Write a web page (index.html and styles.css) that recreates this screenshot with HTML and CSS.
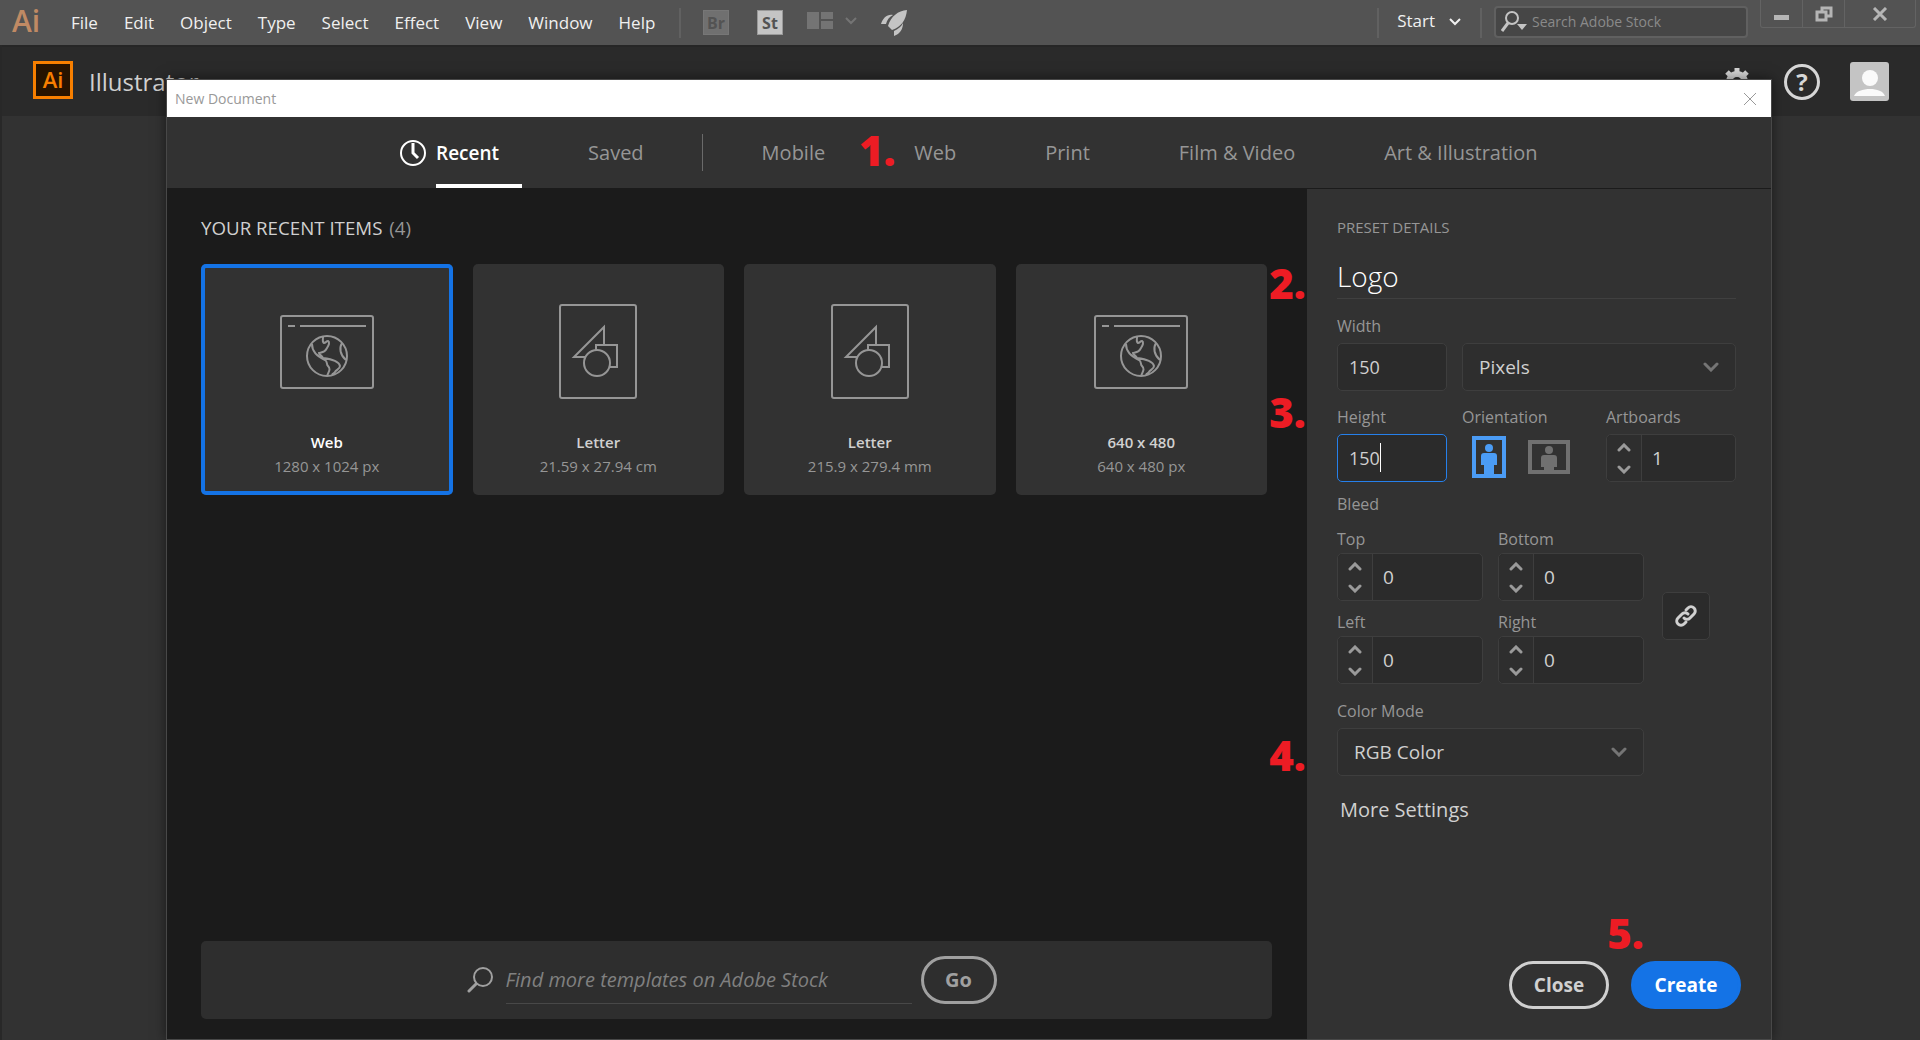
FILE: index.html
```html
<!DOCTYPE html>
<html lang="en">
<head>
<meta charset="utf-8">
<title>New Document - Illustrator</title>
<link rel="stylesheet" href="styles.css">
</head>
<body>
<svg class="defs" aria-hidden="true">
  <defs>
    <symbol id="chevron-down" viewBox="0 0 16 10"><path d="M2 2l6 6 6-6" fill="none" stroke="currentColor" stroke-width="3" stroke-linecap="round" stroke-linejoin="miter"/></symbol>
    <symbol id="step-up" viewBox="0 0 14 9"><path d="M2 7l5-5 5 5" fill="none" stroke="currentColor" stroke-width="3" stroke-linecap="round"/></symbol>
    <symbol id="step-down" viewBox="0 0 14 9"><path d="M2 2l5 5 5-5" fill="none" stroke="currentColor" stroke-width="3" stroke-linecap="round"/></symbol>
    <symbol id="web-preset" viewBox="0 0 94 74">
      <g fill="none" stroke="currentColor" stroke-width="2">
        <rect x="1" y="1" width="92" height="72" rx="2"/>
        <path d="M8 11h7M20 11h66"/>
        <circle cx="47" cy="41" r="20"/>
        <path d="M32 29c0 7 4 12 13 16 3 2 1 4 3 6 3 3 1 5-1 10M43 22c0 3-1 5 1 6 2 0 2-2 4-2 2 1 1 4-1 7-2 4-4 4-8 5 0 2 3 2 4 5 8 1 16 3 17 8 0 3-4 4-5 6-1 2-2 1-3 3M62 28c-3 5-2 12 4 17"/>
      </g>
    </symbol>
    <symbol id="art-preset" viewBox="0 0 78 95">
      <g fill="none" stroke="currentColor" stroke-width="2">
        <rect x="1" y="1" width="76" height="93" rx="2"/>
        <path d="M27 53H15l30-30v18M37 46v-5h21v22h-8"/>
        <circle cx="38" cy="59" r="13"/>
      </g>
    </symbol>
  </defs>
</svg>

<header class="menubar">
  <span class="brand">Ai</span>
  <nav class="menus">
    <button>File</button><button>Edit</button><button>Object</button><button>Type</button><button>Select</button><button>Effect</button><button>View</button><button>Window</button><button>Help</button>
  </nav>
  <span class="rule"></span>
  <div class="tools">
    <button class="chip chip-off">Br</button>
    <button class="chip">St</button>
    <button class="layout" aria-label="Arrange documents">
      <svg width="26" height="17" viewBox="0 0 26 17" fill="currentColor"><path d="M0 0h12v17H0zM14 0h12v7H14zM14 9h12v8H14z"/></svg>
      <svg width="12" height="8" viewBox="0 0 12 8" fill="none" stroke="currentColor" stroke-width="2"><path d="M1 1l5 5 5-5"/></svg>
    </button>
    <button class="rocket" aria-label="GPU performance">
      <svg width="26" height="26" viewBox="0 0 26 26" fill="currentColor"><path d="M26 0c-9 1-16 6-19 16l4 4C20 17 25 10 26 0zM12 5C6 4 2 8 0 14h5c1-4 3-7 7-9zM13 21c4-2 7-4 9-8 0 6-3 11-9 13z"/></svg>
    </button>
  </div>
  <div class="right-tools">
    <span class="rule"></span>
    <button class="workspace">Start <svg width="12" height="9" viewBox="0 0 12 9" fill="none" stroke="currentColor" stroke-width="2"><path d="M1 1l5 5 5-5"/></svg></button>
    <span class="rule"></span>
    <label class="stock-search">
      <svg width="26" height="21" viewBox="0 0 26 21"><circle cx="11" cy="7" r="6" fill="none" stroke="currentColor" stroke-width="2"/><path d="M7 12l-6 8" stroke="currentColor" stroke-width="3"/><path d="M16 13h10l-5 6z" fill="currentColor"/></svg>
      <input type="text" placeholder="Search Adobe Stock" aria-label="Search Adobe Stock">
    </label>
    <div class="window-buttons">
      <button aria-label="Minimize"><svg width="16" height="16" viewBox="0 0 16 16"><path d="M0 9h15v5H0z" fill="currentColor"/></svg></button>
      <button aria-label="Restore"><svg width="18" height="16" viewBox="0 0 18 16" fill="none" stroke="currentColor" stroke-width="3"><path d="M7 5V2h9v8h-4"/><path d="M2 6h9v8H2z"/></svg></button>
      <button class="quit" aria-label="Close window"><svg width="16" height="14" viewBox="0 0 16 14" stroke="currentColor" stroke-width="3"><path d="M2 1l12 12M14 1L2 13"/></svg></button>
    </div>
  </div>
</header>

<main class="app">
  <div class="app-header">
    <span class="app-logo">Ai</span>
    <h1>Illustrator</h1>
    <div class="app-actions">
      <button aria-label="Settings"><svg width="30" height="30" viewBox="0 0 30 30"><circle cx="15" cy="15" r="8" fill="none" stroke="currentColor" stroke-width="6"/><path d="M15 1v6M15 23v6M1 15h6M23 15h6M5 5l4 4M21 21l4 4M25 5l-4 4M9 21l-4 4" stroke="currentColor" stroke-width="5"/></svg></button>
      <button class="help" aria-label="Help">?</button>
      <button aria-label="Account"><svg width="39" height="39" viewBox="0 0 39 39"><rect width="39" height="39" rx="3" fill="#c4c4c4"/><ellipse cx="20" cy="16" rx="8" ry="8" fill="#fafafa"/><path d="M4 34c2-5 9-7 16-7s13 2 15 7z" fill="#fafafa"/></svg></button>
    </div>
  </div>

  <section class="dialog" role="dialog" aria-labelledby="dialog-title">
    <div class="titlebar">
      <h2 id="dialog-title">New Document</h2>
      <button aria-label="Close dialog"><svg width="14" height="14" viewBox="0 0 14 14" stroke="currentColor"><path d="M1 1l12 12M13 1L1 13"/></svg></button>
    </div>

    <nav class="tabs">
      <a class="active" href="#recent">
        <svg width="26" height="26" viewBox="0 0 26 26" fill="none" stroke="currentColor"><circle cx="13" cy="13" r="12" stroke-width="2"/><path d="M13 3v10l5 5" stroke-width="3"/></svg>
        <span>Recent</span>
      </a>
      <a href="#saved">Saved</a>
      <span class="tab-rule"></span>
      <a href="#mobile">Mobile</a>
      <a href="#web">Web</a>
      <a href="#print">Print</a>
      <a href="#film">Film &amp; Video</a>
      <a href="#art">Art &amp; Illustration</a>
      <span class="marker marker-1">1.</span>
    </nav>

    <div class="panes">
      <div class="recent" id="recent">
        <h3>YOUR RECENT ITEMS <span>(4)</span></h3>
        <div class="cards">
          <button class="card selected"><svg width="94" height="74"><use href="#web-preset"/></svg><strong>Web</strong><span>1280 x 1024 px</span></button>
          <button class="card"><svg width="78" height="95"><use href="#art-preset"/></svg><strong>Letter</strong><span>21.59 x 27.94 cm</span></button>
          <button class="card"><svg width="78" height="95"><use href="#art-preset"/></svg><strong>Letter</strong><span>215.9 x 279.4 mm</span></button>
          <button class="card"><svg width="94" height="74"><use href="#web-preset"/></svg><strong>640 x 480</strong><span>640 x 480 px</span></button>
        </div>
        <form class="templates">
          <svg width="26" height="26" viewBox="0 0 26 26" fill="none" stroke="currentColor"><circle cx="16" cy="10" r="9" stroke-width="2"/><path d="M9 17l-7 7" stroke-width="3" stroke-linecap="round"/></svg>
          <input type="text" placeholder="Find more templates on Adobe Stock" aria-label="Find more templates on Adobe Stock">
          <button type="button">Go</button>
        </form>
        <span class="marker marker-2">2.</span>
        <span class="marker marker-3">3.</span>
        <span class="marker marker-4">4.</span>
      </div>

      <form class="details">
        <h3>PRESET DETAILS</h3>
        <input class="doc-name" type="text" value="Logo" aria-label="Document name">

        <div class="size-grid">
          <div class="field">
            <label for="width">Width</label>
            <input class="box" id="width" type="text" value="150">
          </div>
          <div class="field units">
            <div class="select"><select id="units" aria-label="Units"><option>Pixels</option></select><svg width="16" height="10"><use href="#chevron-down"/></svg></div>
          </div>
          <div class="field">
            <label for="height">Height</label>
            <div class="editing"><input class="box" id="height" type="text" value="150"><i class="caret"></i></div>
          </div>
          <div class="field">
            <span class="label">Orientation</span>
            <div class="orientation">
              <button type="button" class="on" aria-label="Portrait"><svg width="34" height="42" viewBox="0 0 34 42"><path d="M2 2h30v38H2z" fill="none" stroke="currentColor" stroke-width="4"/><circle cx="17" cy="12" r="4" fill="currentColor"/><path d="M9 20q0-3 3-3h10q3 0 3 3v9h-3v10H12V29H9z" fill="currentColor"/></svg></button>
              <button type="button" aria-label="Landscape"><svg width="42" height="34" viewBox="0 0 42 34"><path d="M2 2h38v30H2z" fill="none" stroke="currentColor" stroke-width="4"/><circle cx="21" cy="10" r="4" fill="currentColor"/><path d="M13 18q0-3 3-3h10q3 0 3 3v9h-3v5H16v-5h-3z" fill="currentColor"/></svg></button>
            </div>
          </div>
          <div class="field">
            <label for="artboards">Artboards</label>
            <div class="stepper"><div class="steps"><button type="button" aria-label="More artboards"><svg width="14" height="9"><use href="#step-up"/></svg></button><button type="button" aria-label="Fewer artboards"><svg width="14" height="9"><use href="#step-down"/></svg></button></div><input id="artboards" type="text" value="1"></div>
          </div>
        </div>

        <span class="label bleed-title">Bleed</span>
        <div class="bleed">
          <div class="bleed-grid">
            <div class="field"><label for="top">Top</label>
              <div class="stepper"><div class="steps"><button type="button" aria-label="Increase top"><svg width="14" height="9"><use href="#step-up"/></svg></button><button type="button" aria-label="Decrease top"><svg width="14" height="9"><use href="#step-down"/></svg></button></div><input id="top" type="text" value="0"></div></div>
            <div class="field"><label for="bottom">Bottom</label>
              <div class="stepper"><div class="steps"><button type="button" aria-label="Increase bottom"><svg width="14" height="9"><use href="#step-up"/></svg></button><button type="button" aria-label="Decrease bottom"><svg width="14" height="9"><use href="#step-down"/></svg></button></div><input id="bottom" type="text" value="0"></div></div>
            <div class="field"><label for="left">Left</label>
              <div class="stepper"><div class="steps"><button type="button" aria-label="Increase left"><svg width="14" height="9"><use href="#step-up"/></svg></button><button type="button" aria-label="Decrease left"><svg width="14" height="9"><use href="#step-down"/></svg></button></div><input id="left" type="text" value="0"></div></div>
            <div class="field"><label for="right">Right</label>
              <div class="stepper"><div class="steps"><button type="button" aria-label="Increase right"><svg width="14" height="9"><use href="#step-up"/></svg></button><button type="button" aria-label="Decrease right"><svg width="14" height="9"><use href="#step-down"/></svg></button></div><input id="right" type="text" value="0"></div></div>
          </div>
          <button type="button" class="link" aria-label="Link bleed values"><svg width="24" height="24" viewBox="0 0 24 24" fill="none" stroke="currentColor" stroke-width="3" stroke-linecap="round"><path d="M10 14a4 4 0 0 0 6 0l4-4a4 4 0 0 0-6-6l-2 2"/><path d="M14 10a4 4 0 0 0-6 0l-4 4a4 4 0 0 0 6 6l2-2"/></svg></button>
        </div>

        <div class="field color-mode">
          <label for="mode">Color Mode</label>
          <div class="select"><select id="mode"><option>RGB Color</option></select><svg width="16" height="10"><use href="#chevron-down"/></svg></div>
        </div>
        <button type="button" class="more">More Settings</button>

        <div class="actions">
          <button type="button" class="pill">Close</button>
          <button type="button" class="pill primary">Create</button>
          <span class="marker marker-5">5.</span>
        </div>
      </form>
    </div>
  </section>
</main>
</body>
</html>
```
FILE: styles.css
```css
* { box-sizing: border-box; }
html, body { height: 100%; }
body {
  margin: 0;
  display: flex;
  flex-direction: column;
  overflow: hidden;
  background: #323232;
  color: #d0d0d0;
  font: 16px/24px "Open Sans", "Noto Sans", sans-serif;
}
button, input, select { font: inherit; color: inherit; }
button { border: 0; padding: 0; background: none; }
input, select { min-width: 0; border: 0; padding: 0; background: none; outline: none; }
select { appearance: none; }
svg { display: block; flex: none; }
h1, h2, h3 { margin: 0; font-weight: 400; }
.defs { position: absolute; width: 0; height: 0; }

/* Application menu bar */
.menubar {
  flex: none;
  display: flex;
  align-items: center;
  height: 45px;
  background: #535353;
  color: #f0f0f0;
}
.brand { width: 71px; padding: 0 0 4px 12px; color: #c08a64; font-size: 30px; font-weight: 600; line-height: 40px; }
.menus { display: flex; gap: 26px; width: 608px; font-size: 17px; }
.rule { width: 2px; height: 30px; background: #616161; }
.tools { display: flex; align-items: center; margin-left: 22px; }
.chip {
  width: 26px;
  height: 25px;
  margin-right: 28px;
  border: 1px solid #999;
  background: #c4c4c4;
  color: #535353;
  font-size: 16px;
  font-weight: 700;
  line-height: 22px;
}
.chip-off { border-color: #777; background: #707070; }
.layout { display: flex; align-items: center; gap: 12px; margin: 0 24px 4px -4px; color: #747474; }
.rocket { color: #c4c4c4; }
.right-tools { display: flex; align-items: center; align-self: stretch; margin-left: auto; padding-right: 4px; }
.workspace { display: flex; align-items: center; gap: 14px; margin: 0 19px 4px 18px; font-size: 17px; }
.workspace svg { margin-top: 4px; }
.stock-search {
  display: flex;
  align-items: center;
  gap: 5px;
  width: 254px;
  height: 32px;
  margin: 0 12px 2px;
  padding-left: 5px;
  border: 2px solid #606060;
  border-radius: 4px;
  background: #464646;
  color: #c4c4c4;
  font-size: 14px;
}
.stock-search input::placeholder { color: #8a8a8a; }
.stock-search input { flex: 1; }
.window-buttons { display: flex; align-self: flex-start; height: 28px; border: solid #636363; border-width: 0 1px 1px; border-radius: 0 0 3px 3px; color: #b5b5b5; }
.window-buttons button { display: grid; place-items: center; width: 42px; border-right: 1px solid #636363; }
.window-buttons .quit { width: 70px; border: 0; }

/* Start screen behind the dialog */
.app { position: relative; flex: 1; min-height: 0; border-left: 2px solid #282828; }
.app-header { display: flex; align-items: center; height: 71px; padding: 0 31px; border-top: 2px solid #262626; background: #2a2a2a; }
.app-logo {
  width: 40px;
  height: 38px;
  margin-bottom: 4px;
  border: 3px solid #f77f00;
  background: #261300;
  color: #f77f00;
  font-size: 22px;
  font-weight: 600;
  line-height: 30px;
  text-align: center;
}
h1 { margin-left: 16px; font-size: 24px; }
.app-actions { display: flex; align-items: center; margin-left: auto; color: #d6d6d6; }
.help { width: 36px; height: 36px; margin: 0 30px 0 32px; border: 3px solid; border-radius: 50%; font-size: 24px; font-weight: 700; line-height: 28px; }

/* New Document window */
.dialog {
  position: absolute;
  inset: 34px 148px 0 164px;
  display: flex;
  flex-direction: column;
  border: 1px solid #484848;
  background: #323232;
  box-shadow: 0 0 12px rgba(0, 0, 0, .5);
}
.titlebar { display: flex; align-items: center; justify-content: space-between; height: 37px; padding: 0 14px 0 8px; background: #fff; color: #999; }
.titlebar h2 { font-size: 14px; }

.tabs { position: relative; display: flex; align-items: center; height: 71px; padding-left: 233px; font-size: 20px; white-space: nowrap; }
.tabs a { margin-right: 89px; color: #969696; text-decoration: none; }
.tabs .active { display: flex; align-items: center; align-self: stretch; gap: 10px; margin-right: 66px; color: #fff; font-size: 19px; font-weight: 600; }
.tabs .active span { align-self: stretch; padding: 24px 23px 0 0; border-bottom: 4px solid #fff; }
.tabs .tab-rule { width: 1px; height: 37px; margin: 0 59px 0 -31px; background: #6a6a6a; }

.panes { flex: 1; display: flex; min-height: 0; }
.recent { position: relative; flex: 1; display: flex; flex-direction: column; padding: 28px 35px 20px 34px; background: #1b1b1b; }
.recent h3 span { margin-left: 2px; color: #969696; }
.cards { display: grid; grid-template-columns: repeat(4, 1fr); gap: 20px; margin: 24px 5px 0 0; }
.card { display: flex; flex-direction: column; align-items: center; height: 231px; padding: 9px 0 17px; border-radius: 5px; background: #323232; color: #969696; font-size: 15px; }
.card.selected { box-shadow: inset 0 0 0 4px #1473e6; }
.card svg { margin: auto; }
.card strong { color: #d0d0d0; font-weight: 600; }
.card.selected strong { color: #fff; }
.templates { display: flex; align-items: center; justify-content: center; height: 78px; margin-top: auto; padding-right: 10px; border-radius: 5px; background: #2e2e2e; color: #a0a0a0; font-size: 20px; }
.templates input { width: 406px; height: 40px; margin: 8px 9px 0 13px; padding-bottom: 8px; border-bottom: 1px solid #484848; font-style: italic; }
.templates input::placeholder { color: #808080; }
.templates button { width: 76px; height: 48px; border: 3px solid #a0a0a0; border-radius: 24px; font-weight: 700; }

/* Preset details */
.details { width: 464px; display: flex; flex-direction: column; padding: 26px 35px 30px 30px; border-top: 1px solid #1b1b1b; }
.details h3, .details label, .label { color: #969696; }
.details h3 { font-size: 15px; }
.doc-name { height: 42px; margin-top: 18px; padding-bottom: 4px; border-bottom: 1px solid #404040; color: #fff; font-size: 28px; font-weight: 300; }
.field { display: flex; flex-direction: column; justify-content: flex-end; gap: 5px; }
.size-grid { display: grid; grid-template-columns: 110px 1fr 130px; gap: 14px 15px; margin-top: 15px; }
.units { grid-column: span 2; }
.box, .select, .stepper, .link { height: 48px; border: 1px solid #3e3e3e; border-radius: 5px; background: #2b2b2b; font-size: 18px; }
.box { width: 100%; padding-left: 11px; }
.editing { position: relative; }
.editing .box { border-color: #2680eb; }
.caret { position: absolute; left: 43px; top: 9px; width: 1px; height: 29px; background: #fff; }
.select { display: grid; align-items: center; background: #2e2e2e; font-size: 19px; }
.select select, .select svg { grid-area: 1 / 1; }
.select select { width: 100%; height: 100%; padding-left: 16px; }
.select svg { justify-self: end; margin-right: 16px; color: #757575; pointer-events: none; }
.orientation { display: flex; align-items: center; gap: 22px; height: 48px; padding: 0 0 2px 10px; color: #707070; }
.orientation .on { color: #4b9cf5; }
.stepper { display: flex; font-size: 19px; }
.steps { flex: none; display: flex; flex-direction: column; justify-content: space-between; align-items: center; width: 35px; padding: 8px 0 7px; border-right: 1px solid #3e3e3e; background: #2e2e2e; border-radius: 5px 0 0 5px; color: #9a9a9a; }
.stepper input { flex: 1; padding-left: 10px; }
.bleed-title { margin-top: 10px; }
.bleed { display: flex; align-items: center; gap: 18px; margin-top: 11px; }
.bleed-grid { display: grid; grid-template-columns: 146px 146px; gap: 9px 15px; }
.bleed .field { gap: 2px; }
.link { display: grid; place-items: center; width: 48px; margin-top: 20px; }
.color-mode { width: 307px; margin-top: 15px; }
.more { align-self: flex-start; margin: 22px 0 0 3px; font-size: 20px; }
.actions { position: relative; display: flex; justify-content: flex-end; gap: 22px; margin: auto -5px 0 0; }
.pill { width: 100px; height: 48px; border: 3px solid #d0d0d0; border-radius: 24px; font-size: 19px; font-weight: 700; }
.primary { width: 110px; border-color: #1473e6; background: #1473e6; color: #fff; }

/* Numbered callouts */
.marker { position: absolute; color: #ed1c24; font-family: "Noto Sans", "Open Sans", sans-serif; font-size: 42px; font-weight: 900; line-height: 42px; }
.marker-1 { left: 692px; top: 12px; }
.marker-2 { right: 1px; top: 74px; }
.marker-3 { right: 1px; top: 203px; }
.marker-4 { right: 1px; top: 546px; }
.marker-5 { right: 97px; bottom: 55px; }
```
